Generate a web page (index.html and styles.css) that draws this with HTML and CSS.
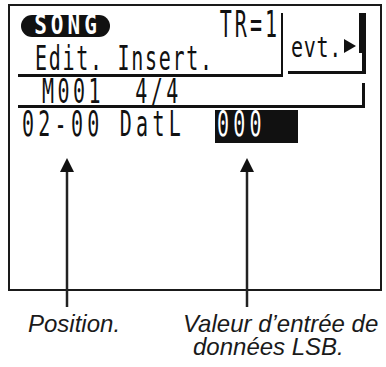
FILE: index.html
```html
<!DOCTYPE html>
<html lang="fr">
<head>
    <meta charset="UTF-8">
    <meta name="viewport" content="width=device-width, initial-scale=1.0">
    <title>SONG Edit Insert - DatL</title>
    <link rel="stylesheet" href="styles.css">
</head>
<body>
    <div class="page">
        <div class="lcd">
            <div class="row-top">
                <div class="head">
                    <div class="head-line">
                        <span class="pill"><span class="lcd-text pill-text">SONG</span></span>
                        <span class="lcd-text tr">TR=1</span>
                    </div>
                    <div class="mode"><span class="lcd-text">Edit. Insert.</span></div>
                </div>
                <div class="evt">
                    <span class="lcd-text evt-text">evt.</span>
                    <svg class="evt-icon" width="19" height="40" viewBox="0 0 19 40">
                        <polygon points="1,26 1,40 13,33" fill="#111"/>
                        <rect x="16" y="0" width="3" height="40" fill="#111"/>
                    </svg>
                </div>
            </div>
            <div class="row-meas"><span class="lcd-text">M001  4/4</span></div>
            <div class="row-data">
                <span class="lcd-text data-text">02-00 DatL</span>
                <span class="value-box"><span class="lcd-text value">000</span></span>
            </div>
        </div>
        <div class="captions">
            <p class="cap cap-pos">Position.</p>
            <p class="cap cap-val">Valeur d’entrée de<span class="cap-line2">données LSB.</span></p>
        </div>
        <svg class="callouts" width="386" height="367" viewBox="0 0 386 367">
            <line x1="67" y1="170" x2="67" y2="307" stroke="#222" stroke-width="2.5"/>
            <polygon points="60,172 67,158 74,172" fill="#111"/>
            <line x1="247" y1="170" x2="247" y2="307" stroke="#222" stroke-width="2.5"/>
            <polygon points="240,172 247,158 254,172" fill="#111"/>
        </svg>
    </div>
</body>
</html>
```

FILE: styles.css
```css
body {
    margin: 0;
    padding: 0;
    background: #fff;
    font-family: "Liberation Sans", Arial, sans-serif;
}

.page {
    position: relative;
    width: 386px;
    height: 367px;
    padding: 4px 0 0 8px;
    box-sizing: border-box;
}

.lcd {
    width: 362px;
    height: 276px;
    border: 2px solid #1a1a1a;
    padding: 7px 0 0 8px;
    box-sizing: content-box;
    color: #111;
}

/* LCD characters: tall, narrow, bottom aligned */
.lcd-text {
    display: inline-block;
    font-family: "DejaVu Sans Mono", "Liberation Mono", monospace;
    font-size: 20px;
    line-height: 16px;
    height: 16px;
    white-space: pre;
    transform: scaleY(1.72);
    transform-origin: 0 100%;
}

.row-top {
    display: flex;
    height: 64px;
}

.head {
    width: 263px;
    height: 61px;
    border-right: 2px solid #111;
    border-bottom: 3px solid #111;
}

.head-line {
    display: flex;
    justify-content: space-between;
    height: 26px;
}

.pill {
    display: flex;
    justify-content: center;
    align-items: flex-end;
    margin: 2px 0 0 3px;
    width: 89px;
    height: 22px;
    padding: 0 0 2px 4px;
    box-sizing: border-box;
    border-radius: 11px;
    background: #111;
}

.pill-text {
    color: #fff;
    font-size: 21px;
    font-weight: bold;
    letter-spacing: 4px;
    transform: scaleY(1.3);
}

.tr {
    align-self: flex-end;
    margin-right: 1px;
    letter-spacing: 3px;
    transform: scaleY(1.85);
}

.mode {
    margin: 17px 0 0 17px;
}

.mode .lcd-text {
    letter-spacing: 1.7px;
}

.evt {
    display: flex;
    align-items: flex-start;
    margin-left: 5px;
    width: 78px;
    height: 61px;
    padding-left: 3px;
    box-sizing: border-box;
    border-right: 4px solid #111;
    border-bottom: 3px solid #111;
}

.evt-text {
    flex-shrink: 0;
    width: 51px;
    margin-top: 29px;
    letter-spacing: 0.7px;
    transform: scaleY(1.4);
}

.evt-icon {
    display: block;
    flex-shrink: 0;
    margin-left: 1px;
}

.row-meas {
    margin-top: 6px;
    width: 320px;
    height: 22px;
    padding-left: 24px;
    box-sizing: content-box;
    border-right: 3px solid #111;
    border-bottom: 3px solid #111;
    display: flex;
    align-items: flex-end;
}

.row-meas .lcd-text {
    letter-spacing: 3.5px;
}

.row-data {
    display: flex;
    align-items: flex-start;
    margin-top: 2px;
    padding-left: 4px;
    height: 33px;
}

.data-text {
    margin-top: 12px;
    width: 163px;
    letter-spacing: 4.26px;
    transform: scaleY(1.8);
}

.value-box {
    display: flex;
    align-items: flex-end;
    margin-left: 30px;
    width: 81px;
    height: 33px;
    padding-left: 2px;
    background: #111;
}

.value {
    color: #fff;
    margin-bottom: 5px;
    letter-spacing: 4.26px;
    transform: scaleY(1.8);
}

.captions {
    display: flex;
    margin-top: 21px;
    padding-left: 20px;
}

.cap {
    margin: 0;
    font-style: italic;
    font-size: 24px;
    line-height: 23px;
    color: #1a1a1a;
}

.cap-pos {
    width: 155px;
}

.cap-line2 {
    display: block;
    padding-left: 10px;
}

.callouts {
    position: absolute;
    top: 0;
    left: 0;
    pointer-events: none;
}
```
